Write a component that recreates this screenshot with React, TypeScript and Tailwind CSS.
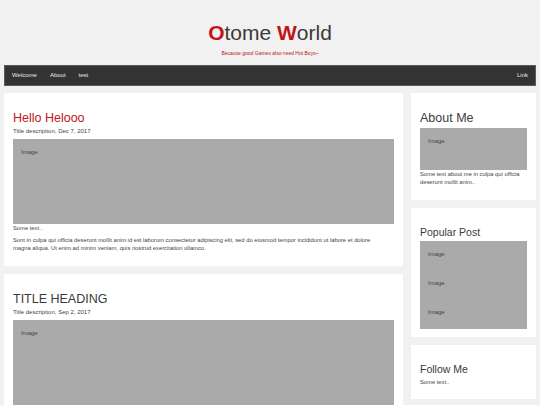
const red = 'text-[#c0141a]';

function ImageBox({ className = '' }: { className?: string }) {
  return (
    <div className={`bg-[#aaaaaa] pl-[8px] pt-[10px] ${className}`}>
      <span className="block text-[6px] leading-[6.5px] text-[#444]">Image</span>
    </div>
  );
}

function PostCard({ title, date, titleClass }: { title: string; date: string; titleClass: string }) {
  return (
    <div className="bg-white px-[9px] pt-[8px] pb-[8px]">
      <h3 className={`mt-[10px] text-[12.5px] leading-[15px] ${titleClass}`}>{title}</h3>
      <p className="mt-[1.5px] text-[6px] leading-[7.5px] text-[#444]">{date}</p>
      <ImageBox className="mt-[4px] h-[85px]" />
      <p className="text-[5.8px] leading-[8px] text-[#444]">Some text..</p>
      <p className="mt-[4px] mb-[5px] pr-[14px] text-[5.8px] leading-[8.3px] text-[#444]">
        Sunt in culpa qui officia deserunt mollit anim id est laborum consectetur adipiscing elit, sed do
        eiusmod tempor incididunt ut labore et dolore magna aliqua. Ut enim ad minim veniam, quis nostrud
        exercitation ullamco.
      </p>
    </div>
  );
}

function SideCard({ title, big, children }: { title: string; big?: boolean; children: React.ReactNode }) {
  return (
    <div className="bg-white px-[9px] pt-[8px] pb-[8px]">
      <h4
        className={
          big
            ? 'mt-[10px] text-[12.5px] leading-[15px] text-[#3a3a3a]'
            : 'mt-[10px] text-[10.5px] leading-[13px] text-[#3a3a3a]'
        }
      >
        {title}
      </h4>
      {children}
    </div>
  );
}

export default function App() {
  return (
    <div
      className="min-h-screen bg-[#f1f1f1] px-[4px]"
      style={{ fontFamily: '"Liberation Sans", Arial, sans-serif' }}
    >
      {/* Header */}
      <header className="pt-[20px] text-center">
        <h1 className="text-[21px] leading-[25px] text-[#3a3a3a]">
          <b className={red}>O</b>tome <b className={red}>W</b>orld
        </h1>
        <p className="mt-[5px] text-[5px] leading-[6px] text-[#c0141a]">Because good Games also need Hot Boys~</p>
      </header>

      {/* Nav */}
      <nav className="mt-[9px] flex h-[20.5px] items-center border border-[#5a5a5a] bg-[#333333] px-[0.5px] text-[6px] text-[#e8e8e8]">
        <a className="px-[6.5px]">Welcome</a>
        <a className="px-[6.5px]">About</a>
        <a className="px-[6.5px]">test</a>
        <a className="ml-auto px-[6.5px]">Link</a>
      </nav>

      {/* Content */}
      <div className="mt-[7.5px] flex gap-[8px]">
        <div className="flex w-[399px] flex-col gap-[8.5px]">
          <PostCard title="Hello Helooo" date="Title description, Dec 7, 2017" titleClass={red} />
          <PostCard title="TITLE HEADING" date="Title description, Sep 2, 2017" titleClass="text-[#3a3a3a]" />
        </div>

        <div className="flex flex-1 flex-col gap-[8.5px]">
          <SideCard title="About Me" big>
            <ImageBox className="mt-[1.5px] h-[42px]" />
            <p className="mb-[6px] text-[5.8px] leading-[8px] text-[#444]">
              Some text about me in culpa qui officia deserunt mollit anim..
            </p>
          </SideCard>
          <SideCard title="Popular Post">
            <div className="mt-[1.5px] bg-[#aaaaaa]">
              <ImageBox className="h-[29.4px]" />
              <ImageBox className="h-[29.4px]" />
              <ImageBox className="h-[29.4px]" />
            </div>
          </SideCard>
          <SideCard title="Follow Me">
            <p className="mt-[2px] mb-[5px] text-[5.8px] leading-[8px] text-[#444]">Some text..</p>
          </SideCard>
        </div>
      </div>
    </div>
  );
}
